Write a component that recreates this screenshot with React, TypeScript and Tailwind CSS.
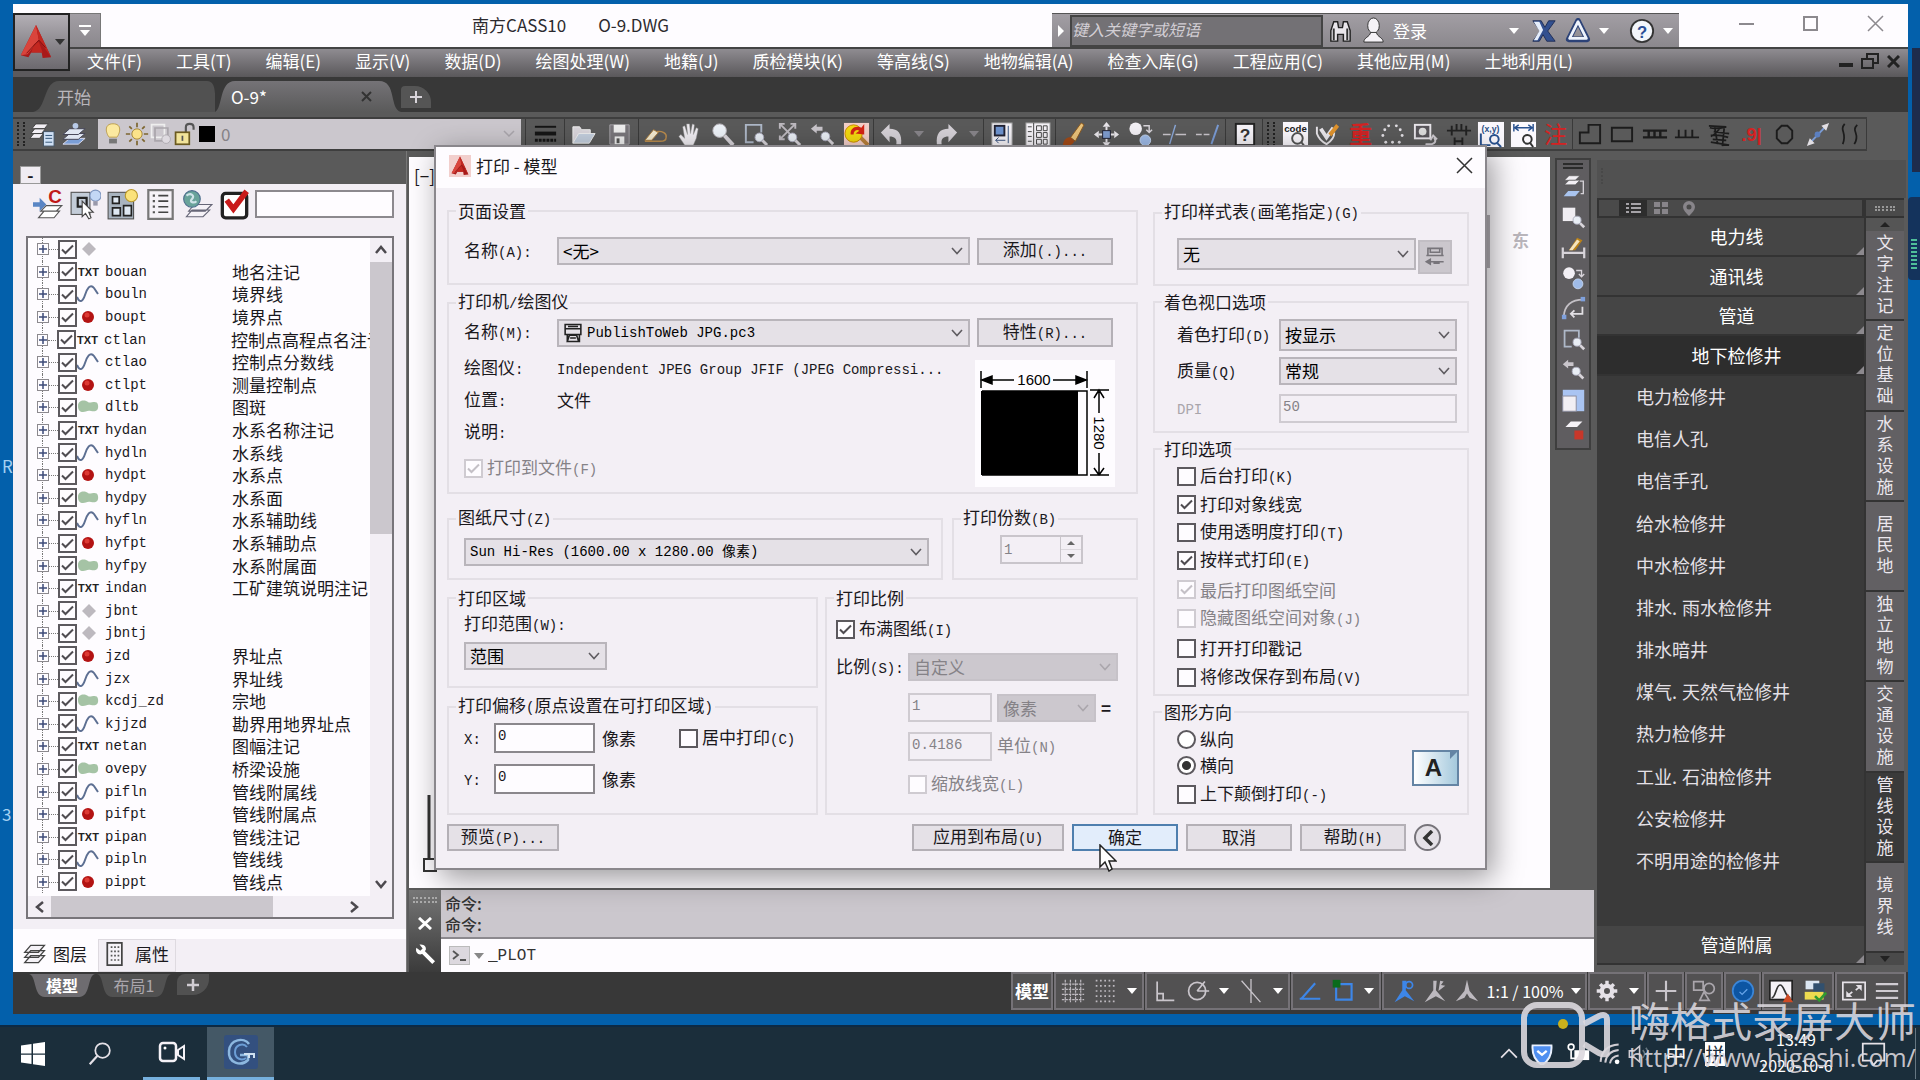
import React from 'react';
import type { ReactNode } from 'react';

const UI = 'font-["Noto_Sans_CJK_SC",sans-serif]';

/* Mixed text: Latin runs in a half-width monospace face, Chinese in the UI face */
function M({ t }: { t: string }) {
  return (
    <span className="whitespace-pre">
      {t.split(/([\x20-\x7e]+)/).filter(Boolean).map((p, i) =>
        /^[\x20-\x7e]+$/.test(p) ? (
          <span key={i} className='font-["Liberation_Mono",monospace] text-[14px]'>{p}</span>
        ) : (
          <span key={i}>{p}</span>
        ),
      )}
    </span>
  );
}

function Svg({ s = 28, children, className = '' }: { s?: number; children: ReactNode; className?: string }) {
  return (
    <svg width={s} height={s} viewBox="0 0 28 28" fill="none" className={`shrink-0 ${className}`} aria-hidden="true">
      {children}
    </svg>
  );
}

/* ---------- form controls ---------- */

function Box({ checked = false, disabled = false, label }: { checked?: boolean; disabled?: boolean; label?: string }) {
  return (
    <span className="relative inline-flex h-[19px] w-[19px] shrink-0">
      <input
        type="checkbox"
        defaultChecked={checked}
        disabled={disabled}
        aria-label={label}
        className="peer h-[19px] w-[19px] appearance-none border-2 border-[#5c595e] bg-[#fefcff] disabled:border-[#cfcbd1]"
      />
      <svg viewBox="0 0 19 19" className="pointer-events-none absolute inset-0 hidden h-[19px] w-[19px] peer-checked:block" fill="none" stroke={disabled ? '#c4c0c6' : '#4f4c51'} strokeWidth="2">
        <path d="M4 9.5 L7.5 13 L15 5.500" />
      </svg>
    </span>
  );
}

function Check({ t, checked, disabled, className = '' }: { t: string; checked?: boolean; disabled?: boolean; className?: string }) {
  return (
    <label className={`flex items-center gap-1 ${disabled ? 'text-[#858287]' : ''} ${className}`}>
      <Box checked={checked} disabled={disabled} />
      <M t={t} />
    </label>
  );
}

function Combo({ value, label, className = '', text = 'text-[17px]', disabled = false }: { value: string; label: string; className?: string; text?: string; disabled?: boolean }) {
  return (
    <span className={`relative inline-flex shrink-0 ${className}`}>
      <select
        aria-label={label}
        disabled={disabled}
        className={`h-full w-full appearance-none border-2 pl-1 opacity-100 ${text} ${disabled ? 'border-[#c6c2c8] bg-[#ccc8ce] text-[#858287]' : 'border-[#b9b5bb] bg-[#e5e1e7] text-black'}`}
      >
        <option>{value}</option>
      </select>
      <svg viewBox="0 0 14 10" className="pointer-events-none absolute top-1/2 right-[6px] h-[10px] w-[14px] -translate-y-1/2" fill="none" stroke={disabled ? '#aaa6ac' : '#5f5c61'} strokeWidth="1.6">
        <path d="M2 2 L7 7.500 L12 2" />
      </svg>
    </span>
  );
}

function Btn({ t, className = '' }: { t: string; className?: string }) {
  return (
    <button className={`flex shrink-0 items-center justify-center border-2 pb-px ${className.includes('bg-') ? '' : 'border-[#b4b0b6] bg-[#e5e1e7]'} ${className}`}>
      <M t={t} />
    </button>
  );
}

function Group({ title, className = '', children }: { title: string; className?: string; children: ReactNode }) {
  return (
    <fieldset className={`min-w-0 border-2 border-[#e3dfe5] ${className}`}>
      <legend className="ml-[7px] px-[2px] leading-[18px]"><M t={title} /></legend>
      {children}
    </fieldset>
  );
}

/* ---------- logos ---------- */

function ALogo({ w, h }: { w: number; h: number }) {
  return (
    <svg width={w} height={h} viewBox="0 0 34 38" aria-hidden="true">
      <path d="M17 1 L1 33 L9 35 L12 30 L23 30 L24 36 L33 35 Z" fill="#a81a1a" />
      <path d="M17 1 L1 33 L8 32 L20 17 Z" fill="#d9443c" />
      <path d="M17 1 L20 17 L33 35 L26 20 Z" fill="#c22720" />
      <path d="M12 30 L15 21 L20 19 L24 30 Z" fill="#c22720" />
      <path d="M7 31 L20 17 L27 25" fill="none" stroke="#7c1010" strokeWidth="1" />
    </svg>
  );
}

/* ---------- toolbar icons ---------- */

const mag = (x: number, y: number) => (
  <>
    <path d={`M${x + 3} ${y + 3} L${x + 8} ${y + 8}`} stroke="#d8d4da" strokeWidth="3" />
    <circle cx={x} cy={y} r="4.500" fill="#e9eef5" stroke="#aab" />
  </>
);

const ic: Record<string, ReactNode> = {
  layerProps: (<><path d="M7 3h13l-4 5H3z M6 8h11l-4 5H2z M5 13h10l-4 5H1z" fill="#f2eff4" stroke="#444" /><rect x="15" y="11" width="11" height="15" fill="#cfe0f5" stroke="#456" /><path d="M17 15h7M17 18h7M17 22h7" stroke="#357" /></>),
  layers: (<><path d="M9 18h16l-7 6H2z" fill="#7b9fd6" stroke="#dde" /><path d="M9 13h16l-7 6H2z" fill="#dfe6f2" stroke="#445" /><path d="M9 8h16l-7 6H2z" fill="#dfe6f2" stroke="#445" /><circle cx="15" cy="5" r="3" fill="#b9cbe8" /></>),
  lw: (<><path d="M3 6h22" stroke="#151515" strokeWidth="2" /><path d="M3 13h22" stroke="#151515" strokeWidth="4" /><path d="M3 20h22" stroke="#151515" strokeWidth="3" strokeDasharray="3 1" /></>),
  open: (<><path d="M3 23V6h7l2 3h9v4" fill="#d9d5db" stroke="#eee" /><path d="M3 23l6-10h17l-6 10z" fill="#c3cedd" stroke="#eee" /></>),
  save: (<><path d="M4 4h20v20H4z" fill="#79767b" stroke="#a8a4aa" /><rect x="8" y="4" width="12" height="8" fill="#eee" /><rect x="9" y="16" width="10" height="8" fill="#eee" /><rect x="11" y="18" width="3" height="5" fill="#555" /></>),
  eraser: (<><path d="M3 20l9-11 5 3-7 8z" fill="#f3ead0" stroke="#a77a3a" /><path d="M15 11c6-1 11 2 10 6 0 3-3 4-6 4H3" stroke="#b98b4d" strokeWidth="1.500" /></>),
  hand: <path d="M9 25l-6-9 2-2 4 4L7 6l2-1 3 9-1-11h3l1 10 2-10 2 1-1 10 3-7 2 1-2 10-3 7z" fill="#f0edf2" stroke="#999" strokeWidth=".5" />,
  zoom: (<><path d="M16 15l9 10" stroke="#d8d4da" strokeWidth="4" /><circle cx="11" cy="10" r="7" fill="#edf2f8" stroke="#b9b5bb" /></>),
  zoomWin: (<><path d="M20 12V4H4v18h8" stroke="#aeb8c8" strokeWidth="2" />{mag(18, 17)}</>),
  zoomExt: (<><path d="M4 3l16 16M20 3L4 19M4 8V3h5M15 3h5v5M4 15v4h5" stroke="#bdb9bf" strokeWidth="2" />{mag(17, 17)}</>),
  zoomPrev: (<><path d="M2 8l6-5v3h6v4H8v3z" fill="#c9c5cb" />{mag(17, 16)}</>),
  colorZoom: (<><rect x="1" y="2" width="26" height="25" fill="#f3cfc9" /><path d="M16 15l10 10" stroke="#b9803a" strokeWidth="4" /><circle cx="11" cy="13" r="9" fill="#f4d90f" stroke="#c80" /><path d="M8 14c-1-6 5-10 11-7l3-4v11l-9-1 4-3c-4-2-6 1-6 4z" fill="#d32314" /></>),
  undo: <path d="M3 12l9-9v5c9 0 13 5 12 16h-5c1-6-2-8-7-8v6z" fill="#d5d1d7" />,
  redo: <path d="M25 12l-9-9v5C7 8 3 13 4 24h5c-1-6 2-8 7-8v6z" fill="#d5d1d7" />,
  win: (<><rect x="4" y="2" width="21" height="24" fill="#f5f2f7" stroke="#999" /><rect x="7" y="5" width="10" height="10" fill="#6e93cf" stroke="#223" strokeWidth="2" /><path d="M8 20h10M8 20l3-3M8 20l3 3M21 5v18" stroke="#35507f" /></>),
  props: (<><rect x="2" y="2" width="25" height="24" fill="#f5f2f7" stroke="#999" /><path d="M10 2v24M13 5h5v5h-5zM20 5h4v5h-4zM13 12h5v5h-5zM20 12h4v5h-4zM13 19h5v5h-5zM20 19h4v5h-4zM4 6h4M4 11h4M4 16h4M4 21h4" stroke="#444" /></>),
  brush: (<><path d="M12 17L23 2l3 2-9 17z" fill="#e9c27a" stroke="#8a5a20" /><path d="M4 26c0-6 4-10 8-9l4 4c-2 4-7 6-12 5z" fill="#a34a16" /></>),
  move: (<><path d="M14 1l4 5h-8zM14 27l4-5h-8zM1 14l5-4v8zM27 14l-5-4v8z" fill="#e9e6eb" /><path d="M14 6v16M6 14h16" stroke="#e9e6eb" strokeWidth="2" /><rect x="10" y="10" width="8" height="8" fill="#7f9dd0" stroke="#223" /></>),
  copy: (<><circle cx="9" cy="8" r="6.500" fill="#f3f0f5" /><circle cx="19" cy="20" r="5.500" fill="#9fbbe8" stroke="#c6d7f2" /><path d="M17 5h6v6M20 9l3 3 3-3" stroke="#d8d4da" strokeWidth="1.500" /></>),
  trim: (<><path d="M2 14h8M15 14h11" stroke="#c9c5cb" strokeWidth="1.500" /><path d="M15 4L9 24" stroke="#8aa7d8" strokeWidth="1.500" /></>),
  extend: (<><path d="M1 14h15" stroke="#c9c5cb" strokeWidth="1.500" strokeDasharray="6 2" /><path d="M24 4L17 24" stroke="#7a9bd4" strokeWidth="2" /></>),
  help: (<><rect x="5" y="3" width="19" height="22" fill="#f5f2f7" stroke="#222" strokeWidth="2" /><text x="14.500" y="21" fontSize="18" fontWeight="bold" textAnchor="middle" fill="#333" fontFamily="Liberation Sans">?</text></>),
  code: (<><rect x="1" y="1" width="26" height="27" fill="#fbf8fd" /><text x="14" y="11" fontSize="10" fontWeight="bold" textAnchor="middle" fill="#222" fontFamily="Liberation Sans">code</text><circle cx="16" cy="18" r="5.500" stroke="#555" strokeWidth="2" /><path d="M20 22l4 5" stroke="#555" strokeWidth="2" /></>),
  checkPen: (<><path d="M3 6v7c2 6 6 9 10 11 5-3 8-7 8-12" stroke="#e9e6eb" strokeWidth="2" /><path d="M7 8l6 9L20 7" stroke="#e9e6eb" strokeWidth="4" /><path d="M15 13l8-10 3 3-8 10z" fill="#e0932d" /></>),
  chong: <text x="14" y="23" fontSize="24" fontWeight="bold" textAnchor="middle" fill="#d42222" fontFamily="Noto Sans CJK SC">重</text>,
  dots: (<g fill="#e2dfe4"><circle cx="10" cy="5" r="1.500" /><circle cx="18" cy="5" r="1.500" /><circle cx="4" cy="15" r="1.500" /><circle cx="24" cy="15" r="1.500" /><circle cx="6" cy="9" r="1.500" /><circle cx="22" cy="9" r="1.500" /><circle cx="7" cy="22" r="1.500" /><circle cx="21" cy="22" r="1.500" /><circle cx="14" cy="22" r="1.500" /></g>),
  camArrow: (<><rect x="3" y="4" width="16" height="14" fill="#59565b" stroke="#e9e6eb" strokeWidth="2" /><circle cx="11" cy="11" r="4" fill="#ddd" /><path d="M14 24c9 1 12-2 9-7M26 19l-4-4-3 5" stroke="#d0ccd2" strokeWidth="2" /></>),
  hash: (<><path d="M2 10h25M7 5v10M12 3v7M17 3v7M22 5v10" stroke="#222" strokeWidth="2" /><path d="M10 17v9M18 17v9M10 21h8" stroke="#222" strokeWidth="2" /></>),
  xy: (<><rect x="1" y="1" width="27" height="26" fill="#fbf8fd" /><text x="14" y="11" fontSize="9" fontWeight="bold" textAnchor="middle" fill="#2a4f86" fontFamily="Liberation Sans">(x,y)</text><path d="M4 13v12h10" stroke="#28518f" strokeWidth="2" /><circle cx="18" cy="19" r="4.500" stroke="#28518f" strokeWidth="2" /><path d="M21 23l4 4" stroke="#28518f" strokeWidth="2" /></>),
  dist: (<><rect x="1" y="1" width="26" height="26" fill="#fbf8fd" /><path d="M4 3v8M24 3v8M5 7h18M9 4L5 7l4 3M19 4l4 3-4 3" stroke="#28518f" strokeWidth="1.500" /><circle cx="18" cy="19" r="4.500" stroke="#333" strokeWidth="2" /><path d="M21 23l3 4" stroke="#333" strokeWidth="2" /></>),
  zhu: <text x="14" y="23" fontSize="24" textAnchor="middle" fill="#d42222" fontFamily="Noto Sans CJK SC">注</text>,
  poly: <path d="M4 23V12h9V4h12v19z" stroke="#1c1c1c" strokeWidth="2" />,
  rect: <path d="M4 7h21v14H4z" stroke="#1c1c1c" strokeWidth="2" />,
  fence: <path d="M2 10h25M2 17h25M8 10v7M14 10v7M20 10v7" stroke="#1c1c1c" strokeWidth="2.500" />,
  comb: <path d="M2 17h25M6 17V9M13 17V9M20 17V9" stroke="#1c1c1c" strokeWidth="2" />,
  bridge: <path d="M3 5l18 1c-4 1-12 2-17 1M8 11l16 2M5 15c5-1 12 0 18 2M5 22l19 3M9 6l3 18M15 6c-3 6-6 8-10 10M19 6l-2 20M7 19l14 1" stroke="#1c1c1c" strokeWidth="1.800" />,
  nine: <text x="13" y="21" fontSize="19" fontWeight="bold" textAnchor="middle" fill="#d42222" fontFamily="Liberation Sans">.9|</text>,
  oct: <path d="M11 5h6l5 5v8l-5 5h-6l-5-5v-8z" stroke="#1c1c1c" strokeWidth="2" />,
  diag: (<><path d="M6 23L23 5" stroke="#7a9bd4" strokeWidth="2" /><path d="M26 2l-8 3 5 5zM3 26l3-8 5 5z" fill="#e2dfe4" /><circle cx="14" cy="14" r="3" fill="#5b7fc0" /></>),
  waves: <path d="M9 3c-6 7 3 9-2 21M22 4c-7 7 4 9-3 20" stroke="#1c1c1c" strokeWidth="1.800" />,
  layerArrow: (<><path d="M9 2h12l-5 5H4z M9 7h12l-5 5H4z" fill="#f2eff4" stroke="#444" strokeWidth=".5" /><path d="M8 19h13l-5 6H3z" fill="#a9c4ef" /><path d="M21 8h4v14h-3" stroke="#d5d1d7" strokeWidth="1.500" /></>),
  boxZoom: (<><rect x="2" y="3" width="14" height="15" fill="#f0edf2" />{mag(18, 17)}</>),
  dimPen: (<><path d="M2 14v12M26 14v12M3 20h22" stroke="#d8d4da" strokeWidth="2.500" /><path d="M9 17l9-14 6 3-8 11z" fill="#b98018" /><path d="M9 17l9-12 3 2-8 10z" fill="#f4e3bd" /></>),
  curve: (<><path d="M3 23C4 11 11 4 25 4" stroke="#c4c0c6" strokeWidth="2" /><path d="M24 12v8H12M15 16l-4 4 4 4" stroke="#e2dfe4" strokeWidth="2" /><rect x="1" y="21" width="5" height="5" fill="#7fa0dc" /><rect x="22" y="1" width="5" height="5" fill="#7fa0dc" /></>),
  scale: (<><rect x="2" y="2" width="24" height="24" fill="#aac4f2" /><rect x="2" y="9" width="15" height="17" fill="#f2eff4" stroke="#889" /></>),
  layerOff: (<><path d="M11 4h13l-6 6H5z" fill="#f5f2f7" /><rect x="15" y="14" width="10" height="10" fill="#c8372a" /></>),
};

function TBtn({ n }: { n: string }) {
  return (
    <button aria-label={n} className="flex items-center justify-center">
      <Svg s={27}>{ic[n]}</Svg>
    </button>
  );
}

function TGroup({ items, className }: { items: string[]; className: string }) {
  return (
    <div className={`flex h-full shrink-0 items-center justify-around border-l border-[#3a3a3a] ${className}`}>
      {items.map((n, i) =>
        n === 'v' ? <Tri key={i} className="border-t-[#88858a]" /> : <TBtn key={i} n={n} />,
      )}
    </div>
  );
}

function Tri({ className = 'border-t-white' }: { className?: string }) {
  return <span className={`h-0 w-0 shrink-0 border-x-[5px] border-t-[6px] border-x-transparent ${className}`} />;
}

function Grip() {
  return <span className="mx-1 h-6 w-2 shrink-0 border-x-2 border-dotted border-[#222]" />;
}

/* ---------- top of the window ---------- */

const menus = ['文件(F)', '工具(T)', '编辑(E)', '显示(V)', '数据(D)', '绘图处理(W)', '地籍(J)', '质检模块(K)', '等高线(S)', '地物编辑(A)', '检查入库(G)', '工程应用(C)', '其他应用(M)', '土地利用(L)'];

function Header() {
  return (
    <header className="flex shrink-0 bg-[linear-gradient(#fefcff_0_43px,#5c5a5d_43px)]">
      <button aria-label="应用程序菜单" className="mt-[9px] flex h-[58px] w-[57px] shrink-0 items-center justify-center gap-[2px] border-2 border-[#222] bg-linear-to-b from-[#b3afb5] to-[#6c696e]">
        <ALogo w={34} h={36} />
        <Tri className="border-t-[#333]" />
      </button>
      <div className="flex min-w-0 flex-1 flex-col">
        <div className="flex h-[43px] items-end">
          <button aria-label="快速访问" className="flex h-[34px] w-[31px] flex-col items-center justify-center gap-[3px] border-t border-r border-[#777] bg-linear-to-b from-[#a29ea4] to-[#8b888d]">
            <span className="h-[2px] w-3 bg-white" />
            <Tri className="border-t-white" />
          </button>
          <h1 className="mb-2 flex flex-1 justify-center gap-8 pr-5 pl-[8px] text-[17px] leading-7 text-[#2c2a2e]">
            <span>南方CASS10</span>
            <span>O-9.DWG</span>
          </h1>
          <div className="flex h-[34px] w-[627px] shrink-0 items-center border-t border-[#555] bg-linear-to-b from-[#a29ea4] to-[#8b888d] text-white">
            <span className="ml-[6px] h-0 w-0 border-y-[6px] border-l-[6px] border-y-transparent border-l-white" />
            <input aria-label="搜索" placeholder="键入关键字或短语" className="ml-[6px] h-8 w-[253px] border-2 border-[#444] bg-[#737175] pb-1 text-[16px] italic placeholder:text-[#d2ced4]" />
            <button aria-label="搜索" className="ml-1">
              <Svg s={27}><path d="M4 25V14l3-9h4l1 6h4l1-6h4l3 9v11h-7v-7h-6v7z" fill="#e9e6eb" stroke="#222" strokeWidth="1.500" /><path d="M7 12v12M21 12v12" stroke="#333" strokeWidth="2" /></Svg>
            </button>
            <button className="ml-[6px] flex items-center gap-[6px] text-[17px] leading-7">
              <Svg s={27}><ellipse cx="14" cy="9" rx="6" ry="8" fill="#f5f2f7" stroke="#333" /><path d="M4 26c0-5 6-5 7-10h6c1 5 7 5 7 10z" fill="#f5f2f7" stroke="#333" /></Svg>
              登录
            </button>
            <span className="flex-1" />
            <Tri />
            <button aria-label="Exchange" className="ml-3"><Svg s={26}><path d="M2 3h9l4 7 4-7h7l-8 11 8 11h-9l-4-7-4 7H2l8-11z" fill="#33508f" stroke="#1d2c55" /><path d="M3 4h6l4 9-6 11H3l6-10z" fill="#e6eefb" /></Svg></button>
            <button aria-label="A360" className="ml-2"><Svg s={26}><path d="M14 3L4 23h20z" stroke="#2c4277" strokeWidth="6" strokeLinejoin="round" /><path d="M14 4L5 22h18z" stroke="#eef3fb" strokeWidth="3" strokeLinejoin="round" /></Svg></button>
            <Tri className="ml-2 border-t-white" />
            <button aria-label="帮助" className="mr-2 ml-5"><Svg s={26}><circle cx="14" cy="14" r="12" fill="#f3f6fb" stroke="#333" strokeWidth="2" /><text x="14" y="21" fontSize="18" fontWeight="bold" textAnchor="middle" fill="#2b4f97" fontFamily="Liberation Sans">?</text></Svg></button>
            <Tri className="mr-[6px] border-t-white" />
          </div>
          <div className="flex w-[229px] shrink-0 items-center justify-end gap-[49px] self-center pr-6 pb-1">
            <button aria-label="最小化" className="h-4 w-[15px]"><span className="block h-[2px] bg-[#8c898e]" /></button>
            <button aria-label="最大化" className="h-[15px] w-[15px] border-2 border-[#8c898e]" />
            <button aria-label="关闭"><svg width="17" height="17" viewBox="0 0 17 17" stroke="#8c898e" strokeWidth="1.500"><path d="M1 1L16 16M16 1L1 16" /></svg></button>
          </div>
        </div>
        <nav className="flex h-[30px] items-center border-t-2 border-[#444] bg-linear-to-b from-[#8f8c91] to-[#5a585b] pb-1 text-[17px] text-white">
          {menus.map((m) => (
            <button key={m} className="px-[17px] leading-6 whitespace-nowrap">{m}</button>
          ))}
          <span className="flex-1" />
          <div className="flex items-center gap-2 pr-2">
            <button aria-label="最小化文档" className="mt-2 h-1 w-[14px] bg-[#222]" />
            <button aria-label="还原文档"><svg width="18" height="16" viewBox="0 0 18 16" fill="none" stroke="#222" strokeWidth="2"><path d="M6 5V1h11v9h-5M1 6h11v9H1z" /></svg></button>
            <button aria-label="关闭文档"><svg width="13" height="13" viewBox="0 0 13 13" stroke="#222" strokeWidth="3"><path d="M1 1L12 12M12 1L1 12" /></svg></button>
          </div>
        </nav>
      </div>
    </header>
  );
}

function FileTabs() {
  return (
    <div className="flex h-[35px] shrink-0 items-end bg-[#383838] pl-5 text-[17px]">
      <button className="relative h-[31px] w-[182px] pl-6 text-left text-[#b9b6bb]">
        <svg className="absolute inset-0 h-full w-full" viewBox="0 0 182 31" preserveAspectRatio="none" aria-hidden="true"><path d="M0 31C14 29 10 0 26 0H174C184 0 182 16 182 31z" fill="#515151" /></svg>
        <span className="relative">开始</span>
      </button>
      <div className="relative flex h-[31px] w-[186px] items-center pl-4 text-white">
        <svg className="absolute inset-0 h-full w-full" viewBox="0 0 186 31" preserveAspectRatio="none" aria-hidden="true"><defs><linearGradient id="ft" x2="0" y2="1"><stop stopColor="#757377" /><stop offset="1" stopColor="#5a5a5a" /></linearGradient></defs><path d="M0 31C8 27 4 0 20 0H164C182 0 174 28 186 31z" fill="url(#ft)" /></svg>
        <button className="relative flex-1 text-left">O-9*</button>
        <button aria-label="关闭标签" className="relative mr-[29px]"><svg width="11" height="11" viewBox="0 0 11 11" stroke="#333" strokeWidth="2"><path d="M1 1L10 10M10 1L1 10" /></svg></button>
      </div>
      <button aria-label="新标签" className="mb-1 flex h-[22px] w-[30px] items-center justify-center rounded-tl-sm rounded-tr-2xl bg-[#555] text-[#d8d4da]">
        <svg width="12" height="12" viewBox="0 0 12 12" stroke="currentColor" strokeWidth="2"><path d="M6 0V12M0 6H12" /></svg>
      </button>
    </div>
  );
}

function Toolbar() {
  return (
    <div className="mt-[5px] flex h-[34px] shrink-0 items-center">
      <div className="flex h-full items-center border-y-2 border-[#3e3e3e]">
        <Grip />
        <div className="flex w-[69px] items-center gap-[5px]"><TBtn n="layerProps" /><TBtn n="layers" /></div>
        <button className="flex h-[30px] w-[423px] shrink-0 items-center bg-[#cbc7cd] pl-1 text-[17px] text-[#858287]">
          <Svg s={22}><path d="M14 1c-12 0-9 12-5 17h10c4-5 7-17-5-17z" fill="#fbe9a0" stroke="#b3913a" /><path d="M9 20h10v6H9z" fill="#777" /></Svg>
          <Svg s={24} className="ml-px"><circle cx="14" cy="14" r="6" fill="#fbe38a" stroke="#9c7b2a" /><path d="M14 1v5M14 22v5M1 14h5M22 14h5M5 5l3 3M20 20l3 3M23 5l-3 3M5 23l3-3" stroke="#7d6630" strokeWidth="2" /></Svg>
          <Svg s={24}><path d="M3 3h15v15H3z" stroke="#eee" strokeWidth="2" /><path d="M7 7h15v15H7z" stroke="#aaa6ac" strokeWidth="2" /><circle cx="20" cy="20" r="5" fill="#dedae0" stroke="#aaa6ac" /></Svg>
          <Svg s={24}><path d="M15 12V6c0-5 9-5 9 0v3" stroke="#555" strokeWidth="2.500" /><rect x="3" y="12" width="16" height="14" fill="#f2e49a" stroke="#6b5a20" strokeWidth="2" /><path d="M11 16v6" stroke="#555" strokeWidth="2" /></Svg>
          <span className="ml-[2px] h-4 w-4 bg-black" />
          <span className="ml-[6px]">0</span>
          <span className="flex-1" />
          <svg width="12" height="8" viewBox="0 0 12 8" fill="none" stroke="#aaa6ac" strokeWidth="1.500" className="mr-[6px]"><path d="M1 1l5 5 5-5" /></svg>
        </button>
        <TGroup className="ml-1 w-[39px]" items={['lw']} />
        <TGroup className="w-[74px]" items={['open', 'save']} />
        <TGroup className="w-[235px]" items={['eraser', 'hand', 'zoom', 'zoomWin', 'zoomExt', 'zoomPrev', 'colorZoom']} />
        <TGroup className="w-[110px]" items={['undo', 'v', 'redo', 'v']} />
        <TGroup className="w-[72px]" items={['win', 'props']} />
        <TGroup className="w-[170px]" items={['brush', 'move', 'copy', 'trim', 'extend']} />
        <TGroup className="w-[38px] border-r" items={['help']} />
        <Grip />
        <TGroup className="w-[293px] border-l-0" items={['code', 'checkPen', 'chong', 'dots', 'camArrow', 'hash', 'xy', 'dist', 'zhu']} />
        <TGroup className="w-[295px] border-r" items={['poly', 'rect', 'fence', 'comb', 'bridge', 'nine', 'oct', 'diag', 'waves']} />
      </div>
    </div>
  );
}

/* ---------- left palette ---------- */

const layers: [string, string, string][] = [
  ['d', '', ''], ['t', 'bouan', '地名注记'], ['l', 'bouln', '境界线'], ['p', 'boupt', '境界点'],
  ['t', 'ctlan', '控制点高程点名注记'], ['l', 'ctlao', '控制点分数线'], ['p', 'ctlpt', '测量控制点'], ['a', 'dltb', '图斑'],
  ['t', 'hydan', '水系名称注记'], ['l', 'hydln', '水系线'], ['p', 'hydpt', '水系点'], ['a', 'hydpy', '水系面'],
  ['l', 'hyfln', '水系辅助线'], ['p', 'hyfpt', '水系辅助点'], ['a', 'hyfpy', '水系附属面'], ['t', 'indan', '工矿建筑说明注记'],
  ['d', 'jbnt', ''], ['d', 'jbntj', ''], ['p', 'jzd', '界址点'], ['l', 'jzx', '界址线'], ['a', 'kcdj_zd', '宗地'],
  ['l', 'kjjzd', '勘界用地界址点'], ['t', 'netan', '图幅注记'], ['a', 'ovepy', '桥梁设施'], ['l', 'pifln', '管线附属线'],
  ['p', 'pifpt', '管线附属点'], ['t', 'pipan', '管线注记'], ['l', 'pipln', '管线线'], ['p', 'pippt', '管线点'],
];

function LayerIcon({ k }: { k: string }) {
  return (
    <svg width="23" height="20" viewBox="0 0 23 20" fill="none" className="shrink-0" aria-hidden="true">
      {k === 'd' && <path d="M12 3l7 7-7 7-7-7z" fill="#bdb9bf" />}
      {k === 't' && <text x="11.500" y="14" fontSize="11" fontWeight="bold" textAnchor="middle" fill="#222" fontFamily="Liberation Sans">TXT</text>}
      {k === 'l' && <path d="M0 13c3 7 6 4 8-2s5-12 9-7l4 6" stroke="#5d6f92" strokeWidth="2" />}
      {k === 'p' && (<><circle cx="11" cy="10" r="6" fill="#b31313" /><circle cx="10" cy="8" r="2.500" fill="#dd3a34" /></>)}
      {k === 'a' && <path d="M1 9c0-7 8-6 10-4s9-3 10 3-3 7-7 6-5 1-8 1-5-2-5-6z" fill="#a5c3a5" />}
    </svg>
  );
}

function Chevron({ d }: { d: string }) {
  return <svg width="12" height="12" viewBox="0 0 12 12" fill="none" stroke="#4c494e" strokeWidth="2.500" aria-hidden="true"><path d={d} /></svg>;
}

function LeftPalette() {
  return (
    <aside className="flex w-[394px] shrink-0 flex-col border-r border-[#777] bg-[#f3eff5]">
      <div className="flex h-[33px] items-end bg-[#5a5a5a] pl-[7px]">
        <button className="h-[18px] w-[21px] border border-[#999] bg-[#f0ecf2] text-[17px] leading-[14px] font-bold">-</button>
      </div>
      <div className="mt-[6px] flex h-7 items-center pl-[20px]">
        <div className="flex w-[222px] items-center justify-between pr-[5px]">
          <button aria-label="定位图层"><Svg s={31}><path d="M0 12h6V8l6 6-6 6v-4H0z" fill="#5a86c4" /><text x="20" y="13" fontSize="17" fontWeight="bold" textAnchor="middle" fill="#c01818" fontFamily="Liberation Sans">C</text><path d="M12 15h14l-5 5H7zM10 20h14l-5 6H5z" fill="#fff" stroke="#555" /></Svg></button>
          <button aria-label="选择"><Svg s={31}><rect x="1" y="3" width="17" height="20" fill="#c3ccd8" stroke="#555" /><path d="M7 8h8v8H7z" stroke="#222" strokeWidth="2" /><path d="M11 11v14l3-3 3 5 2-1-2-5h4z" fill="#fff" stroke="#444" /><circle cx="23" cy="6" r="5" fill="#c3d7f5" stroke="#7d95bf" /><path d="M21 11h4v4h-4z" fill="#99a" /></Svg></button>
          <button aria-label="显示图层"><Svg s={31}><rect x="1" y="3" width="23" height="24" fill="#a8b3bf" stroke="#555" /><path d="M5 7h6v6H5zM5 17h7v7H5zM15 15h7v9h-7z" fill="#dfe8f2" stroke="#222" strokeWidth="1.500" /><circle cx="22" cy="6" r="5.500" fill="#fbe27a" stroke="#b8962a" /></Svg></button>
          <button aria-label="列表"><Svg s={31}><rect x="3" y="1" width="22" height="26" fill="#f5f2f7" stroke="#777" strokeWidth="2" /><path d="M12 6h9M12 11h9M12 16h9M12 21h9" stroke="#444" strokeWidth="1.500" /><path d="M7 5h2v2H7zM7 10h2v2H7zM7 15h2v2H7zM7 20h2v2H7z" fill="#555" /></Svg></button>
          <button aria-label="全局图层"><Svg s={31}><path d="M11 14h16l-6 6H6zM9 19h16l-6 6H4z" fill="#f5f2f7" stroke="#667" /><circle cx="9" cy="9" r="7.500" fill="#69a39a" stroke="#4d6d8d" /><path d="M4 6c4-3 8 0 5 3s2 4 4 2" stroke="#cfe3e8" strokeWidth="2" /></Svg></button>
          <button aria-label="应用"><Svg s={31}><rect x="3" y="4" width="22" height="22" rx="3" stroke="#222" strokeWidth="3" fill="#fff" /><path d="M7 10l6 8L25 2" stroke="#c91a1a" strokeWidth="5" /></Svg></button>
        </div>
        <input aria-label="过滤" className="h-7 w-[139px] border-2 border-[#8c898e] bg-[#fefcff] px-1" />
      </div>
      <div className="mr-3 ml-[13px] mt-[18px] flex flex-1 flex-col border-2 border-[#78757a] bg-[#fefcff]">
        <div className="flex min-h-0 flex-1">
          <ul className='flex min-w-0 flex-1 flex-col overflow-hidden pb-[3px] font-["Noto_Sans_CJK_SC",sans-serif] text-[17px] leading-[22px]'>
            {layers.map(([k, code, name], i) => (
              <li key={i} className="relative flex min-h-0 flex-1 items-center pl-[9px]">
                <span className="absolute top-0 bottom-0 left-[14px] border-l border-dotted border-[#777]" />
                <span className="absolute top-1/2 left-[20px] w-[12px] border-t border-dotted border-[#777]" />
                <button aria-label="展开" className="relative flex h-3 w-3 items-center justify-center border border-[#8c898e] bg-[#fefcff]">
                  <svg width="8" height="8" viewBox="0 0 8 8" stroke="#3d4a78" strokeWidth="1.500"><path d="M4 0V8M0 4H8" /></svg>
                </button>
                <span className="ml-[9px] flex"><Box checked label={code || '0'} /></span>
                <LayerIcon k={k} />
                <span className='ml-[5px] w-[127px] shrink-0 font-["Liberation_Mono",monospace] text-[14px]'>{code}</span>
                <span className="overflow-hidden whitespace-nowrap">{name}</span>
              </li>
            ))}
          </ul>
          <div className="flex w-[22px] shrink-0 flex-col items-center justify-between bg-[#f3eff5]">
            <button aria-label="向上" className="flex h-6 items-center"><Chevron d="M1 9l5-6 5 6" /></button>
            <div className="mb-auto h-[272px] w-full bg-[#cbc7cd]" />
            <button aria-label="向下" className="flex h-6 items-center"><Chevron d="M1 3l5 6 5-6" /></button>
          </div>
        </div>
        <div className="flex h-[21px] items-center bg-[#f3eff5] pr-8">
          <button aria-label="向左" className="flex w-[23px] justify-center"><Chevron d="M9 1L3 6l6 5" /></button>
          <div className="h-full w-[222px] bg-[#cbc7cd]" />
          <span className="flex-1" />
          <button aria-label="向右"><Chevron d="M3 1l6 5-6 5" /></button>
        </div>
      </div>
      <div className="mt-[10px] h-[10px] bg-[#fefcff]" />
      <div className="flex h-[33px] items-stretch text-[17px] leading-[30px] whitespace-nowrap">
        <button className="flex w-[85px] items-center gap-[6px] bg-[#fefcff] pb-1 pl-[10px]">
          <Svg s={24}><path d="M9 16h16l-7 8H2zM9 10h16l-7 8H2zM9 4h16l-7 8H2z" fill="#f5f2f7" stroke="#444" strokeWidth="1.500" /></Svg>图层
        </button>
        <button className="flex w-[78px] items-center gap-2 border border-[#dedae0] pb-1 pl-1">
          <Svg s={24}><path d="M5 1h17v26H5z" fill="#f5f2f7" stroke="#444" strokeWidth="2" /><path d="M9 6h2M13 6h2M17 6h2M9 11h2M13 11h2M17 11h2M9 16h2M13 16h2M17 16h2M9 21h2M13 21h2M17 21h2" stroke="#555" strokeWidth="2" /></Svg>属性
        </button>
      </div>
    </aside>
  );
}

/* ---------- drawing area ---------- */

function Drawing() {
  return (
    <div className="relative mt-[6px] flex-1 bg-[#fefcff] text-[17px]">
      <span className="absolute top-[6px] left-[5px]">[−]</span>
      <svg className="absolute bottom-[15px] left-[14px]" width="16" height="100" viewBox="0 0 16 100" fill="none" stroke="#333" aria-hidden="true"><path d="M6 22V86" strokeWidth="3" /><path d="M1 86h12v12H1z" strokeWidth="2" /></svg>
      <div className="absolute top-[58px] right-[60px] h-[53px] w-[10px] border-r-4 border-[#b5b1b7]" />
      <span className="absolute top-[70px] right-[21px] font-bold text-[#bab6bc]">东</span>
    </div>
  );
}

function Dock() {
  return (
    <div className="mt-[7px] mr-[6px] ml-[5px] flex h-[292px] w-[36px] shrink-0 flex-col items-center justify-around border-2 border-[#3e3e3e] bg-[#5f5d60] pb-[2px]">
      <span className="h-[6px] w-5 border-y-2 border-[#2b2b2b]" />
      {['layerArrow', 'boxZoom', 'dimPen', 'copy', 'curve', 'zoomWin', 'zoomPrev', 'scale', 'layerOff'].map((n) => (
        <button key={n} aria-label={n}><Svg s={25}>{ic[n]}</Svg></button>
      ))}
    </div>
  );
}

function CommandLine() {
  return (
    <div className="mt-[2px] mr-[3px] flex h-[82px] shrink-0 text-[16px]">
      <div className="flex w-8 flex-col items-center justify-between bg-linear-to-b from-[#777] to-[#3b3b3b] py-[7px]">
        <span className="h-[6px] w-6 border-y-2 border-dotted border-[#aaa]" />
        <button aria-label="关闭"><svg width="14" height="13" viewBox="0 0 14 13" stroke="#fff" strokeWidth="3"><path d="M1 1L13 12M13 1L1 12" /></svg></button>
        <button aria-label="自定义"><Svg s={22}><path d="M10 10L25 25" stroke="#fff" strokeWidth="5" /><path d="M3 6l5 4 3-3-4-5c6-1 9 3 8 7l-5 5c-4 2-9-2-7-8z" fill="#fff" /></Svg></button>
      </div>
      <div className="flex flex-1 flex-col">
        <div className="h-[49px] border-b-2 border-[#8c898e] bg-[#cbc7cd] pt-[3px] pl-1 leading-[21px] font-medium text-[#333]">
          <p>命令:</p>
          <p>命令:</p>
        </div>
        <label className="flex flex-1 items-center bg-[#fefcff] pl-2">
          <span className="flex h-[19px] w-[21px] items-center justify-center border border-[#bbb] bg-[#dcd8de]">
            <svg width="15" height="11" viewBox="0 0 15 11" fill="none" stroke="#555" strokeWidth="1.800"><path d="M1 1l5 4-5 4M8 10h6" /></svg>
          </span>
          <Tri className="mr-1 ml-1 border-t-[#888]" />
          <input aria-label="命令行" defaultValue="_PLOT" className='flex-1 bg-transparent font-["Liberation_Mono",monospace] text-[16px] text-[#333] outline-none' />
        </label>
      </div>
    </div>
  );
}

/* ---------- right tool palette ---------- */

const heads = ['电力线', '通讯线', '管道', '地下检修井'];
const wells = ['电力检修井', '电信人孔', '电信手孔', '给水检修井', '中水检修井', '排水.雨水检修井', '排水暗井', '煤气.天然气检修井', '热力检修井', '工业.石油检修井', '公安检修井', '不明用途的检修井'];
const sideTabs = ['文字注记', '定位基础', '水系设施', '居民地', '独立地物', '交通设施', '管线设施', '境界线'];

function HeadRow({ t, className }: { t: string; className: string }) {
  return (
    <button className={`flex shrink-0 items-center justify-center border-b-2 border-[#333] pl-3 text-[18px] text-white ${className}`}>
      <span className="flex-1 text-center">{t}</span>
      <span className="-ml-2 h-0 w-0 self-end border-b-8 border-l-8 border-b-[#8c898e] border-l-transparent" />
    </button>
  );
}

function RightPanel() {
  return (
    <aside className="mb-[7px] flex w-[311px] shrink-0 flex-col pt-[9px] pr-[2px]">
      <div className="h-[38px] bg-[#515151] pt-2 pl-1"><span className="block h-4 border-l-2 border-dotted border-[#484848]" /></div>
      <div className="flex flex-1">
        <div className="flex flex-1 flex-col bg-[#3a3a3a]">
          <div className="flex h-[20px] items-center border-2 border-[#333] bg-[#4a4a4a] pl-5">
            <button aria-label="列表" className="flex h-full w-7 items-center justify-center bg-[#2d2d2d]"><svg width="15" height="12" viewBox="0 0 15 12" stroke="#a5a2a7" strokeWidth="2"><path d="M0 2h3M0 6h3M0 10h3M5 2h10M5 6h10M5 10h10" /></svg></button>
            <button aria-label="网格" className="flex h-full w-7 items-center justify-center"><svg width="14" height="12" viewBox="0 0 14 12" fill="#88858a"><path d="M0 0h6v5H0zM8 0h6v5H8zM0 7h6v5H0zM8 7h6v5H8z" /></svg></button>
            <button aria-label="位置" className="flex h-full w-7 items-center justify-center"><svg width="12" height="15" viewBox="0 0 12 15" fill="#88858a"><path fillRule="evenodd" d="M6 0a6 6 0 0 1 6 6c0 3-3 6-6 9-3-3-6-6-6-9a6 6 0 0 1 6-6zm0 3.500a2.500 2.500 0 1 0 0 5 2.500 2.500 0 0 0 0-5z" /></svg></button>
          </div>
          {heads.map((h, i) => (
            <HeadRow key={h} t={h} className={i % 2 ? (i === 3 ? 'h-10 bg-[#2d2d2d]' : 'h-10 bg-[#454545]') : 'h-[39px] bg-[#454545]'} />
          ))}
          <ul className="flex flex-1 flex-col pb-11 text-[18px] text-[#e5e1e7]">
            {wells.map((w) => (
              <li key={w} className="flex flex-1 items-center pb-px pl-[39px]">{w.split('.').map((p, i) => <span key={i}>{i > 0 && <span className="inline-block w-[10px]">.</span>}{p}</span>)}</li>
            ))}
          </ul>
          <HeadRow t="管道附属" className="h-[39px] bg-[#454545]" />
        </div>
        <div className="flex w-[42px] flex-col border-l-2 border-[#333] pr-[2px]">
          <div className="flex h-5 items-center justify-center border-y-2 border-[#333] bg-[#4a4a4a]"><span className="h-[5px] w-5 border-y-2 border-dotted border-[#999]" /></div>
          <button aria-label="上" className="flex h-[13px] items-center justify-center bg-[#555]"><span className="h-0 w-0 border-x-[5px] border-b-[5px] border-x-transparent border-b-[#222]" /></button>
          {sideTabs.map((t) => (
            <button key={t} className={`flex min-h-0 flex-1 flex-col items-center justify-center border-b-2 border-[#333] pb-1 text-[17px] leading-[21px] text-[#ebe7ed] ${t === '管线设施' ? 'bg-[#3a3a3a]' : 'bg-[#626063]'}`}>
              {[...t].map((c, i) => <span key={i}>{c}</span>)}
            </button>
          ))}
          <button aria-label="下" className="flex h-[12px] items-center justify-center bg-[#4a4a4a]"><Tri className="border-t-[#222]" /></button>
        </div>
      </div>
    </aside>
  );
}

/* ---------- print dialog ---------- */

function PagePreview() {
  return (
    <svg width="140" height="127" viewBox="0 0 140 127" className="mt-[13px] shrink-0 bg-[#fefcff]" fill="none" stroke="#000" strokeWidth="1.500" role="img" aria-label="图纸预览">
      <path d="M6 31h97v84H6z" fill="#000" stroke="none" />
      <path d="M6 11v17M112 11v17M7 20h32M78 20h33M7 31h105v84H7M115 30h19M115 115h19M124 32v21M124 93v21M119 38l5-8 5 8M119 108l5 7 5-7" />
      <path d="M7 20l10-4v8zM111 20l-10-4v8z" fill="#000" />
      <text x="59" y="25" fontSize="15" textAnchor="middle" fill="#000" stroke="none" fontFamily="Liberation Sans">1600</text>
      <text transform="translate(119 73) rotate(90)" fontSize="15" textAnchor="middle" fill="#000" stroke="none" fontFamily="Liberation Sans">1280</text>
    </svg>
  );
}

const field = 'shrink-0 border-2 px-[2px] pb-1 font-["Liberation_Mono",monospace] text-[14px]';

function PrintDialog() {
  return (
    <section role="dialog" aria-label="打印 - 模型" className="absolute top-[141px] left-[421px] w-[1053px] border-2 border-[#8a878c] bg-[#f3eff5] text-[17px] leading-[20px] text-[#1a181c] shadow-[6px_8px_28px_rgba(0,0,0,0.4)]">
      <div className="flex h-[41px] items-center bg-[#fefcff] pr-[12px] pb-1 pl-[13px]">
        <span className="flex h-[22px] w-[22px] items-center justify-center bg-[#f2cfcd]"><ALogo w={18} h={20} /></span>
        <h2 className="ml-[5px] flex-1 text-[17px]">打印 - 模型</h2>
        <button aria-label="关闭"><svg width="17" height="17" viewBox="0 0 17 17" stroke="#333" strokeWidth="1.500"><path d="M1 1L16 16M16 1L1 16" /></svg></button>
      </div>
      <div className="flex gap-[15px] pt-[14px] pr-4 pl-[11px]">
        <div className="flex min-w-0 flex-1 flex-col">
          <Group title="页面设置" className="pb-[18px]">
            <div className="flex items-center pt-[17px] pl-[15px]">
              <span className="w-[93px]"><M t="名称(A):" /></span>
              <Combo label="页面设置名称" value="<无>" className="h-[28px] w-[413px]" />
              <Btn t="添加(.)..." className="ml-[7px] h-[27px] w-[136px]" />
            </div>
          </Group>
          <Group title="打印机/绘图仪" className="mt-[7px] pb-[3px]">
            <div className="flex items-center pt-[5px] pl-[15px]">
              <span className="w-[93px]"><M t="名称(M):" /></span>
              <span className="relative flex">
                <Combo label="打印机名称" value="PublishToWeb JPG.pc3" text='font-["Liberation_Mono",monospace] text-[14px] pl-[28px]' className="h-[28px] w-[413px]" />
                <Svg s={20} className="pointer-events-none absolute top-1 left-[6px]"><path d="M3 8V2h22v6M3 8h22v8H3zM7 5h14M6 26l3-9h10l3 9zM6 16v10h17V16M10 21h8" stroke="#222" strokeWidth="2.200" /></Svg>
              </span>
              <Btn t="特性(R)..." className="ml-[7px] h-[29px] w-[136px]" />
            </div>
            <div className="flex items-start pl-[15px]">
              <div className="w-[511px] shrink-0 pt-[5px]">
                <div className="flex h-8 items-center"><span className="w-[93px]"><M t="绘图仪:" /></span><M t="Independent JPEG Group JFIF (JPEG Compressi..." /></div>
                <div className="flex h-8 items-center"><span className="w-[93px]"><M t="位置:" /></span>文件</div>
                <div className="flex h-8 items-center"><M t="说明:" /></div>
                <Check t="打印到文件(F)" checked disabled className="h-[41px]" />
              </div>
              <PagePreview />
            </div>
          </Group>
          <div className="mt-[14px] flex gap-[9px]">
            <Group title="图纸尺寸(Z)" className="flex-1 pb-[12px]">
              <div className="flex pt-[9px] pl-[15px]">
                <Combo label="图纸尺寸" value="Sun Hi-Res (1600.00 x 1280.00 像素)" text='font-["Liberation_Mono","Noto_Sans_CJK_SC",monospace] text-[14px]' className="h-[28px] w-[465px]" />
              </div>
            </Group>
            <Group title="打印份数(B)" className="w-[186px]">
              <div className="ml-[46px] mt-[6px] flex h-[29px] w-[83px] border-2 border-[#c9c5cb]">
                <input aria-label="打印份数" defaultValue="1" disabled className='w-[58px] px-[2px] font-["Liberation_Mono",monospace] text-[14px] text-[#858287]' />
                <div className="flex flex-1 flex-col border-l border-[#c9c5cb]">
                  <button aria-label="增加" className="flex flex-1 items-center justify-center border-b border-[#dcd8de]"><span className="h-0 w-0 border-x-4 border-b-4 border-x-transparent border-b-[#666]" /></button>
                  <button aria-label="减少" className="flex flex-1 items-center justify-center"><span className="h-0 w-0 border-x-4 border-t-4 border-x-transparent border-t-[#666]" /></button>
                </div>
              </div>
            </Group>
          </div>
          <div className="mt-[9px] flex gap-[7px]">
            <div className="flex w-[371px] flex-col">
              <Group title="打印区域" className="pb-[16px]">
                <div className="pt-[6px] pl-[15px]">
                  <p><M t="打印范围(W):" /></p>
                  <Combo label="打印范围" value="范围" className="mt-[6px] h-[28px] w-[143px]" />
                </div>
              </Group>
              <Group title="打印偏移(原点设置在可打印区域)" className="mt-[8px] pb-[19px]">
                <div className="flex items-center pt-[6px] pl-[15px]">
                  <label htmlFor="ox" className="w-[30px]"><M t="X:" /></label>
                  <input id="ox" defaultValue="0" className={`${field} h-[30px] w-[101px] border-[#8a878c] bg-[#fefcff]`} />
                  <span className="ml-[7px] w-[77px]">像素</span>
                  <Check t="居中打印(C)" />
                </div>
                <div className="flex items-center pt-[11px] pl-[15px]">
                  <label htmlFor="oy" className="w-[30px]"><M t="Y:" /></label>
                  <input id="oy" defaultValue="0" className={`${field} h-[30px] w-[101px] border-[#8a878c] bg-[#fefcff]`} />
                  <span className="ml-[7px]">像素</span>
                </div>
              </Group>
            </div>
            <Group title="打印比例" className="flex-1">
              <div className="pt-[10px] pl-[9px]">
                <Check t="布满图纸(I)" checked className="h-[24px]" />
                <div className="mt-[12px] flex items-center"><span className="w-[72px]"><M t="比例(S):" /></span><Combo label="比例" disabled value="自定义" className="h-[28px] w-[210px]" /></div>
                <div className="mt-[12px] flex items-center gap-[5px] pl-[72px]">
                  <input aria-label="像素数" disabled defaultValue="1" className={`${field} h-[29px] w-[84px] border-[#cfcbd1] text-[#858287]`} />
                  <Combo label="长度单位" disabled value="像素" className="h-[28px] w-[99px]" />
                  <span className="font-bold">=</span>
                </div>
                <label className="mt-[10px] flex items-center gap-[5px] pl-[72px] text-[#858287]">
                  <input disabled defaultValue="0.4186" className={`${field} h-[29px] w-[84px] border-[#cfcbd1]`} />
                  <M t="单位(N)" />
                </label>
                <Check t="缩放线宽(L)" disabled className="mt-[12px] ml-[72px] h-[22px]" />
              </div>
            </Group>
          </div>
        </div>
        <div className="flex w-[316px] shrink-0 flex-col">
          <Group title="打印样式表(画笔指定)(G)" className="pb-[10px]">
            <div className="flex items-start gap-[2px] pt-[15px] pl-[22px]">
              <Combo label="打印样式表" value="无" className="h-[32px] w-[239px]" />
              <button aria-label="编辑样式" className="mt-[2px] flex h-[34px] w-[34px] items-center justify-center border-2 border-[#c2bec4] bg-[#cbc7cd]"><Svg s={22}><path d="M5 3h18v9H5zM8 3v5h12V3M3 12h22M3 20h22M3 20l5-3v6zM12 22h8" stroke="#77747a" strokeWidth="2" /></Svg></button>
            </div>
          </Group>
          <Group title="着色视口选项" className="mt-[7px] pb-[8px]">
            <div className="flex flex-col pt-[8px] pl-[22px]">
              <div className="flex items-center"><span className="w-[102px]"><M t="着色打印(D)" /></span><Combo label="着色打印" value="按显示" className="h-[32px] w-[178px]" /></div>
              <div className="mt-[6px] flex items-center"><span className="w-[102px]"><M t="质量(Q)" /></span><Combo label="质量" value="常规" className="h-[28px] w-[178px]" /></div>
              <label className="mt-[9px] flex items-center text-[#a9a5ab]"><span className="w-[102px]"><M t="DPI" /></span><input disabled defaultValue="50" className={`${field} h-[29px] w-[178px] border-[#cfcbd1] text-[#858287]`} /></label>
            </div>
          </Group>
          <Group title="打印选项" className="mt-[7px] pb-[2px]">
            <div className="flex flex-col pt-[4px] pl-[22px]">
              <Check className="h-[28px]" t="后台打印(K)" />
              <Check className="h-[28px]" t="打印对象线宽" checked />
              <Check className="h-[28px]" t="使用透明度打印(T)" />
              <Check className="h-[29px]" t="按样式打印(E)" checked />
              <Check className="h-[29px]" t="最后打印图纸空间" checked disabled />
              <Check className="h-[29px]" t="隐藏图纸空间对象(J)" disabled />
              <Check className="h-[30px]" t="打开打印戳记" />
              <Check className="h-[29px]" t="将修改保存到布局(V)" />
            </div>
          </Group>
          <Group title="图形方向" className="mt-[7px] pb-[3px]">
            <div className="flex items-center justify-between pt-[5px] pr-[8px] pl-[22px]">
              <div>
                {['纵向', '横向'].map((o, i) => (
                  <label key={o} className="flex h-[26px] items-center gap-1">
                    <input type="radio" name="orient" defaultChecked={i === 1} className="h-[19px] w-[19px] appearance-none rounded-full border-2 border-[#5c595e] bg-white checked:bg-[radial-gradient(circle,#333_0_4px,#fff_5px)]" />
                    {o}
                  </label>
                ))}
                <Check className="h-[32px]" t="上下颠倒打印(-)" />
              </div>
              <div className="relative flex h-[36px] w-[47px] items-center justify-center border-2 border-[#6484a4] bg-linear-to-r from-white to-[#a5c9dd]">
                <span className='pr-1 font-["Liberation_Sans",sans-serif] text-[24px] font-bold text-[#222]'>A</span>
                <span className="absolute -top-px -right-px h-0 w-0 border-b-8 border-l-8 border-b-transparent border-l-[#6484a4]" />
              </div>
            </div>
          </Group>
        </div>
      </div>
      <div className="flex items-center gap-2 pt-[9px] pr-[44px] pb-[17px] pl-[11px]">
        <Btn t="预览(P)..." className="mr-auto h-[27px] w-[112px]" />
        <Btn t="应用到布局(U)" className="h-[27px] w-[152px]" />
        <Btn t="确定" className="h-[27px] w-[106px] border-[#4f7fae] bg-[#e2edfb]" />
        <Btn t="取消" className="h-[27px] w-[106px]" />
        <Btn t="帮助(H)" className="h-[27px] w-[106px]" />
        <button aria-label="更少选项" className="flex h-[27px] w-[27px] items-center justify-center rounded-full border-2 border-[#77747a] bg-[#e5e1e7]"><svg width="12" height="16" viewBox="0 0 12 16" fill="none" stroke="#333" strokeWidth="3.500"><path d="M10 1L3 8l7 7" /></svg></button>
      </div>
      <svg className="pointer-events-none absolute top-[697px] left-[662px]" width="19" height="28" viewBox="0 0 19 28" aria-hidden="true"><path d="M2 1v22l5-5 4 9 3-2-3-8h7z" fill="#fff" stroke="#222" strokeWidth="1.500" /></svg>
    </section>
  );
}

/* ---------- status bar ---------- */

function SGroup({ className, children }: { className: string; children: ReactNode }) {
  return <div className={`flex h-[38px] shrink-0 items-center justify-around border-2 border-[#757277] bg-[#525152] ${className}`}>{children}</div>;
}

function SB({ n, children }: { n: string; children: ReactNode }) {
  return <button aria-label={n}><Svg s={24}>{children}</Svg></button>;
}

function StatusBar() {
  return (
    <div className="flex h-[42px] shrink-0 items-start bg-[#383838] text-[17px] text-white">
      <div className="flex items-start pt-[2px] pl-4">
        <button className="relative h-[23px] w-[66px] text-[16px] leading-[23px] font-bold">
          <svg className="absolute inset-0 h-full w-full" viewBox="0 0 66 23" preserveAspectRatio="none" aria-hidden="true"><path d="M0 0C8 2 4 23 16 23H50C62 23 58 2 66 0z" fill="#6e6c70" /></svg>
          <span className="relative">模型</span>
        </button>
        <button className="relative h-[23px] w-[78px] text-[16px] leading-[23px] text-[#aaa6ac]">
          <svg className="absolute inset-0 h-full w-full" viewBox="0 0 80 23" preserveAspectRatio="none" aria-hidden="true"><path d="M2 0C10 2 6 23 18 23H62C74 23 70 2 78 0z" fill="#515151" /></svg>
          <span className="relative">布局1</span>
        </button>
        <button aria-label="新建布局" className="ml-1 flex h-[21px] w-8 items-center justify-center rounded-tl-lg rounded-br-2xl bg-[#515151]"><svg width="12" height="12" viewBox="0 0 12 12" stroke="#d0ccd2" strokeWidth="2.500"><path d="M6 0V12M0 6H12" /></svg></button>
      </div>
      <span className="flex-1" />
      <div className="flex gap-px pr-[2px]">
        <SGroup className="w-[42px]"><button className="font-bold">模型</button></SGroup>
        <SGroup className="w-[90px]">
          <SB n="栅格"><path d="M5 1v26M11 1v26M17 1v26M23 1v26M1 6h26M1 12h26M1 18h26M1 24h26" stroke="#bdb9bf" strokeDasharray="3 1" strokeWidth="1.400" /></SB>
          <SB n="捕捉"><path d="M2 2h25M2 8h25M2 14h25M2 20h25M2 26h25" stroke="#bdb9bf" strokeDasharray="2 3" strokeWidth="2" /></SB>
          <Tri />
        </SGroup>
        <SGroup className="w-[145px]">
          <SB n="正交"><path d="M6 3v22h20M6 17h7v8" stroke="#c9c5cb" strokeWidth="2" /></SB>
          <SB n="极轴"><circle cx="13" cy="14" r="10" stroke="#c9c5cb" strokeWidth="2" /><path d="M13 14h14M13 14l9-11" stroke="#c9c5cb" strokeWidth="2" /></SB>
          <Tri />
          <SB n="等轴测"><path d="M3 2L25 27M14 0v28" stroke="#c9c5cb" strokeWidth="1.500" /></SB>
          <Tri />
        </SGroup>
        <SGroup className="w-[90px]">
          <SB n="对象追踪"><path d="M2 23h24M4 23L20 5" stroke="#3d86e8" strokeWidth="2.500" /></SB>
          <SB n="对象捕捉"><path d="M6 6h18v18H6z" stroke="#3d86e8" strokeWidth="2.500" /><rect x="2" y="1" width="9" height="9" fill="#0b6b1c" /></SB>
          <Tri />
        </SGroup>
        <SGroup className="w-[205px] pl-1">
          <SB n="注释可见"><path d="M12 2h5l-1 11 10 13-11-6-12 7 9-14z" fill="#3d86e8" /><circle cx="20" cy="7" r="4" stroke="#3d86e8" strokeWidth="2" /></SB>
          <SB n="自动缩放"><path d="M12 2h4l-1 11 11 13-11-6-13 7 10-14zM20 2l4 1-3 4 5 1-8 6z" fill="#bdb9bf" /></SB>
          <SB n="注释"><path d="M14 1l3 13 10 12-10-4-3-5-3 5-10 4 10-12z" fill="#bdb9bf" /></SB>
          <button className="text-[16px] whitespace-nowrap">1:1 / 100%</button>
          <Tri />
        </SGroup>
        <SGroup className="w-[58px]">
          <SB n="设置"><circle cx="14" cy="14" r="6" stroke="#e5e1e7" strokeWidth="5" /><path d="M14 2v5M14 21v5M2 14h5M21 14h5M6 6l3 3M19 19l3 3M22 6l-3 3M9 19l-3 3" stroke="#e5e1e7" strokeWidth="4" /></SB>
          <Tri />
        </SGroup>
        <SGroup className="w-[37px]"><SB n="添加"><path d="M14 2v24M2 14h24" stroke="#c9c5cb" strokeWidth="2.500" /></SB></SGroup>
        <SGroup className="w-[38px]"><SB n="隔离"><path d="M2 3h11v10H2zM14 15l6 10H9z" stroke="#aaa6ac" strokeWidth="2" /><circle cx="20" cy="11" r="6" stroke="#aaa6ac" strokeWidth="2" /></SB></SGroup>
        <SGroup className="w-[37px]"><SB n="硬件加速"><circle cx="14" cy="14" r="12" fill="#0c55a3" stroke="#3b86d8" strokeWidth="2" /><path d="M10 15l3 3 6-6" stroke="#67a5ea" strokeWidth="1.500" /></SB></SGroup>
        <SGroup className="w-[72px]">
          <SB n="性能"><rect x="1" y="2" width="26" height="22" fill="#f5f2f7" stroke="#222" strokeWidth="2" /><path d="M3 22c5 0 5-15 10-15s5 13 12 15" stroke="#333" strokeWidth="2" /><path d="M22 17l6 10H16z" fill="#cf4a24" /></SB>
          <SB n="校验"><rect x="3" y="2" width="16" height="10" fill="#dbe6f2" /><rect x="12" y="5" width="13" height="11" fill="#31506e" /><path d="M2 15h22v9H2z" fill="#eedb50" /><path d="M14 20l5 5 8-9" stroke="#2f9a2f" strokeWidth="3" /></SB>
        </SGroup>
        <SGroup className="w-[71px]">
          <SB n="全屏"><path d="M1 4h26v20H1z" stroke="#e5e1e7" strokeWidth="2" /><path d="M16 7h7v7zM5 21v-7l7 7z" fill="#e5e1e7" /><path d="M6 20l6-5M22 8l-6 5" stroke="#e5e1e7" strokeWidth="2" /></SB>
          <SB n="菜单"><path d="M1 6h26M1 14h26M1 22h26" stroke="#d0ccd2" strokeWidth="2.500" /></SB>
        </SGroup>
      </div>
    </div>
  );
}

/* ---------- taskbar ---------- */

function Taskbar() {
  return (
    <footer className="flex h-[55px] shrink-0 items-center border-t-2 border-[#0d2a44] bg-[#1b2e3b] text-[16px] text-white">
      <button aria-label="开始" className="flex w-[66px] justify-center"><svg width="24" height="24" viewBox="0 0 24 24" fill="#fff"><path d="M0 3.500L10.500 2v9.500H0zM12 1.800L24 0v11.500H12zM0 12.800h10.500V22L0 20.500zM12 12.800h12V24l-12-1.800z" /></svg></button>
      <button aria-label="搜索" className="flex w-[68px] justify-center"><Svg s={24}><circle cx="17" cy="10" r="8.500" stroke="#e5e1e7" strokeWidth="2" /><path d="M11 16L2 26" stroke="#e5e1e7" strokeWidth="2.500" /></Svg></button>
      <button aria-label="录屏" className="ml-[9px] flex h-full w-[57px] items-center justify-center border-b-[3px] border-[#76b0dd]"><Svg s={28}><rect x="2" y="5" width="16" height="18" rx="3" stroke="#f5f2f7" strokeWidth="2.500" /><path d="M20 12l6-4v13l-6-4z" stroke="#f5f2f7" strokeWidth="2" /><circle cx="7" cy="10" r="1.500" fill="#fff" /></Svg></button>
      <button aria-label="CASS" className="ml-[7px] flex h-full w-[67px] items-center justify-center border-b-[3px] border-[#76b0dd] bg-[#445866]">
        <svg width="34" height="34" viewBox="0 0 34 34" fill="none" aria-hidden="true"><rect width="34" height="34" rx="3" fill="#33507f" /><path d="M25 9C20 2 6 4 5 16s12 16 19 9V20h-8" stroke="#8db8e0" strokeWidth="2.500" /><path d="M23 12c-4-5-12-2-12 5s7 9 11 6" stroke="#6c9ed6" strokeWidth="2" /><path d="M20 19h11M25 19v4M30 19v4" stroke="#cfe0f0" strokeWidth="2" /></svg>
      </button>
      <span className="flex-1" />
      <div className="flex items-center">
        <button aria-label="显示隐藏的图标" className="w-8"><Svg s={20}><path d="M3 19L14 8l11 11" stroke="#e5e1e7" strokeWidth="2.500" /></Svg></button>
        <button aria-label="安全" className="w-9"><Svg s={22}><path d="M2 3h24c1 12-4 20-12 25C6 23 1 15 2 3z" fill="#4f8ff0" stroke="#e8f0fd" strokeWidth="2.500" /><path d="M8 10l6 5 6-5" stroke="#fff" strokeWidth="3" /></Svg></button>
        <button aria-label="电源" className="w-[32px]"><Svg s={23}><circle cx="5" cy="6" r="3.500" stroke="#fff" strokeWidth="2" /><path d="M5 10v10h5" stroke="#fff" strokeWidth="2" /><path d="M9 10h18v12H9z" fill="#fff" /></Svg></button>
        <button aria-label="网络" className="w-[28px]"><Svg s={22}><path d="M2 24C3 11 11 3 25 2M8 25c1-9 7-15 17-16M14 26c1-6 5-9 11-10" stroke="#d0ccd2" strokeWidth="2.500" /><circle cx="23" cy="24" r="3" fill="#fff" /></Svg></button>
        <button aria-label="音量" className="w-7"><Svg s={22}><path d="M3 10h6l7-6v20l-7-6H3z" stroke="#d0ccd2" strokeWidth="2" /><path d="M20 9c3 3 3 7 0 10M24 6c4 5 4 11 0 16" stroke="#66757f" strokeWidth="2" /></Svg></button>
        <button className="w-[42px] text-[21px]">中</button>
        <button className="ml-2 flex h-6 w-5 items-center justify-center bg-white text-[19px] leading-6 text-[#1b2e3b]">拼</button>
        <time className="mb-1 ml-4 flex w-[110px] flex-col text-center text-[16px] leading-[26px]"><span>13:49</span><span>2020-10-6</span></time>
        <button aria-label="通知" className="ml-[10px] mr-[29px]"><Svg s={25}><path d="M2 3h24v19h-8l-4 5-3-5H2z" stroke="#e5e1e7" strokeWidth="2" /></Svg></button>
        <span className="h-[51px] w-[5px] border-l border-[#667782]" />
      </div>
    </footer>
  );
}

function Watermark() {
  return (
    <div className="pointer-events-none absolute right-0 bottom-2 flex items-start gap-[18px] pr-[2px] text-[#dcd8de]/90">
      <svg width="90" height="68" viewBox="0 0 90 68" fill="none" stroke="currentColor" strokeWidth="6" className="mt-[6px]" aria-hidden="true">
        <rect x="3" y="3" width="58" height="60" rx="13" />
        <path d="M63 22L78 14q8-3 8 4V47q0 8-8 4L63 42" />
        <circle cx="42" cy="22" r="5" fill="#c9b01c" stroke="none" />
      </svg>
      <div className="flex w-[289px] flex-col whitespace-nowrap">
        <span className="text-[41px] leading-[46px]">嗨格式录屏大师</span>
        <span className='font-["Open_Sans",sans-serif] text-[25px] leading-[30px]'>http://www.higeshi.com/</span>
      </div>
    </div>
  );
}

export default function App() {
  return (
    <div className={`relative flex min-h-screen flex-col overflow-hidden bg-[#0360ab] text-[#1a181c] ${UI}`}>
      <span className="absolute top-[453px] left-[2px] text-[17px] text-[#a5d0f2]">R</span>
      <span className="absolute top-[801px] left-[2px] text-[17px] text-[#a5d0f2]">3</span>
      <span className="absolute top-12 right-0 h-[124px] w-2 bg-[#1e2c4c]" />
      <span className="absolute top-[197px] right-0 flex h-[83px] w-3 justify-center rounded-l bg-[#14335c] pt-[42px]">
        <span className="h-8 w-[6px] bg-[repeating-linear-gradient(to_bottom,#4fbf9a_0_2px,#14335c_2px_4px)]" />
      </span>
      <main className="relative mt-1 mr-3 mb-[11px] ml-[13px] flex flex-1 flex-col bg-[#5a5a5a]">
        <Header />
        <FileTabs />
        <Toolbar />
        <div className="flex flex-1">
          <LeftPalette />
          <div className="ml-[2px] flex min-w-0 flex-1 flex-col">
            <div className="flex flex-1">
              <Drawing />
              <Dock />
            </div>
            <CommandLine />
          </div>
          <RightPanel />
        </div>
        <StatusBar />
        <PrintDialog />
      </main>
      <Taskbar />
      <Watermark />
    </div>
  );
}
